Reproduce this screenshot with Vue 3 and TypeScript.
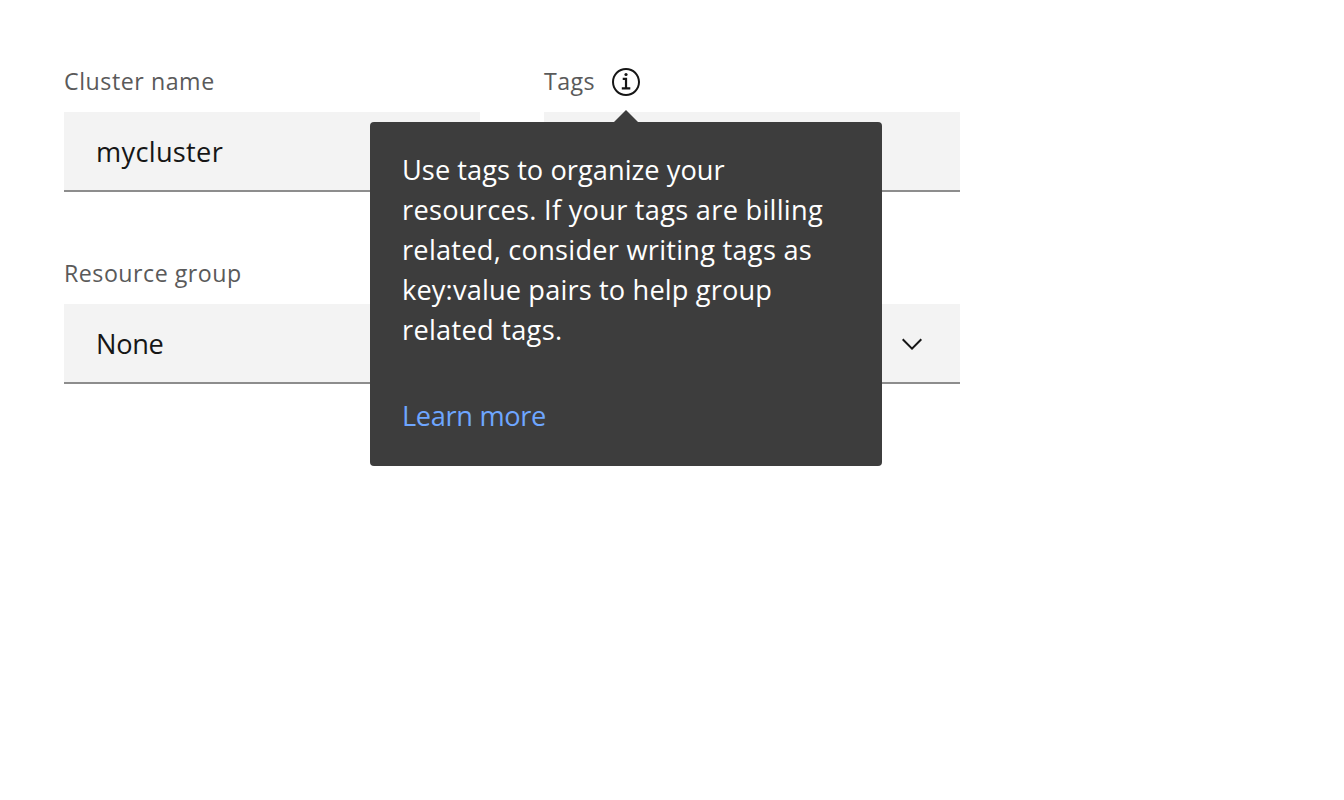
<script setup lang="ts">
interface Field {
  id: string
  label: string
  value: string
  kind: 'text' | 'select'
  tip?: boolean
}

const fields: Field[] = [
  { id: 'name', label: 'Cluster name', value: 'mycluster', kind: 'text' },
  { id: 'tags', label: 'Tags', value: '', kind: 'text', tip: true },
  { id: 'group', label: 'Resource group', value: 'None', kind: 'select' },
]

const tipLines = [
  'Use tags to organize your',
  'resources. If your tags are billing',
  'related, consider writing tags as',
  'key:value pairs to help group',
  'related tags.',
]
</script>

<template>
  <main class="form">
    <div v-for="field in fields" :key="field.id" class="field" :class="field.id">
      <div class="label-row">
        <span class="label">{{ field.label }}</span>
        <div v-if="field.tip" class="toggletip">
          <svg class="icon" viewBox="0 0 16 16" aria-label="Information">
            <path d="M8.56 10.6V5.9h-2.2V7h1.1v3.6H5.9v1.1h4.25v-1.1z" />
            <circle cx="8" cy="4.25" r="0.8" />
            <path d="M8 15c-3.9 0-7-3.1-7-7s3.1-7 7-7 7 3.1 7 7-3.1 7-7 7zM8 2C4.7 2 2 4.7 2 8s2.7 6 6 6 6-2.7 6-6-2.7-6-6-6z" />
          </svg>
          <div class="bubble" role="tooltip">
            <p class="copy">
              <span v-for="line in tipLines" :key="line" class="line">{{ line }}</span>
            </p>
            <a class="link">Learn more</a>
          </div>
        </div>
      </div>
      <div class="control">
        <span class="value">{{ field.value }}</span>
        <svg v-if="field.kind === 'select'" class="icon" viewBox="0 0 16 16">
          <path d="M8 11L3 6l.7-.7L8 9.6l4.3-4.3.7.7z" />
        </svg>
      </div>
    </div>
  </main>
</template>

<style>
body {
  background: #fff;
}
</style>

<style scoped>
.form {
  box-sizing: border-box;
  width: 1344px;
  height: 800px;
  padding: 64px;
  display: grid;
  grid-template-columns: 416px 416px;
  grid-template-rows: 128px 128px;
  gap: 64px;
  font-family: "Open Sans", "Noto Sans", sans-serif;
  color: #161616;
}
.group {
  grid-column: 1 / -1;
}
.label-row {
  display: flex;
  align-items: center;
  height: 36px;
  margin-bottom: 12px;
}
.label {
  padding-bottom: 2px;
  font-size: 23.2px;
  line-height: 34px;
  letter-spacing: 0.55px;
  color: #5a5a5a;
  white-space: nowrap;
}
.tags .label {
  width: 66px;
  letter-spacing: 0.4px;
}
.group .label {
  letter-spacing: 0.5px;
}
.icon {
  display: block;
  flex: none;
  width: 32px;
  height: 32px;
  fill: #161616;
}
.toggletip {
  position: relative;
}
.control {
  box-sizing: border-box;
  display: flex;
  align-items: center;
  justify-content: space-between;
  height: 80px;
  padding: 0 32px;
  border-bottom: 2px solid #8d8d8d;
  background: #f3f3f3;
}
.value {
  padding-top: 2px;
  font-size: 27.2px;
  line-height: 36px;
  letter-spacing: 0.3px;
}
.group .value {
  letter-spacing: -0.3px;
}
.control .icon {
  margin: 2px 0 0;
}
.bubble {
  position: absolute;
  z-index: 1;
  top: 56px;
  left: -240px;
  box-sizing: border-box;
  width: 512px;
  height: 344px;
  padding: 28px 32px;
  border-radius: 4px;
  background: #3d3d3d;
  color: #fff;
  font-size: 27.2px;
  line-height: 40px;
}
.bubble::before {
  content: "";
  position: absolute;
  top: -12px;
  left: 244px;
  width: 24px;
  height: 12px;
  background: #3d3d3d;
  clip-path: polygon(50% 0, 100% 100%, 0 100%);
}
.copy {
  margin: 0 0 46px;
}
.line {
  display: block;
  white-space: nowrap;
  letter-spacing: 0.28px;
}
.line:nth-child(1) {
  letter-spacing: 0.05px;
}
.line:nth-child(3) {
  letter-spacing: 0.25px;
}
.line:nth-child(4) {
  letter-spacing: 0.15px;
}
.link {
  display: block;
  letter-spacing: -0.33px;
  color: #6ea6ff;
}
</style>
